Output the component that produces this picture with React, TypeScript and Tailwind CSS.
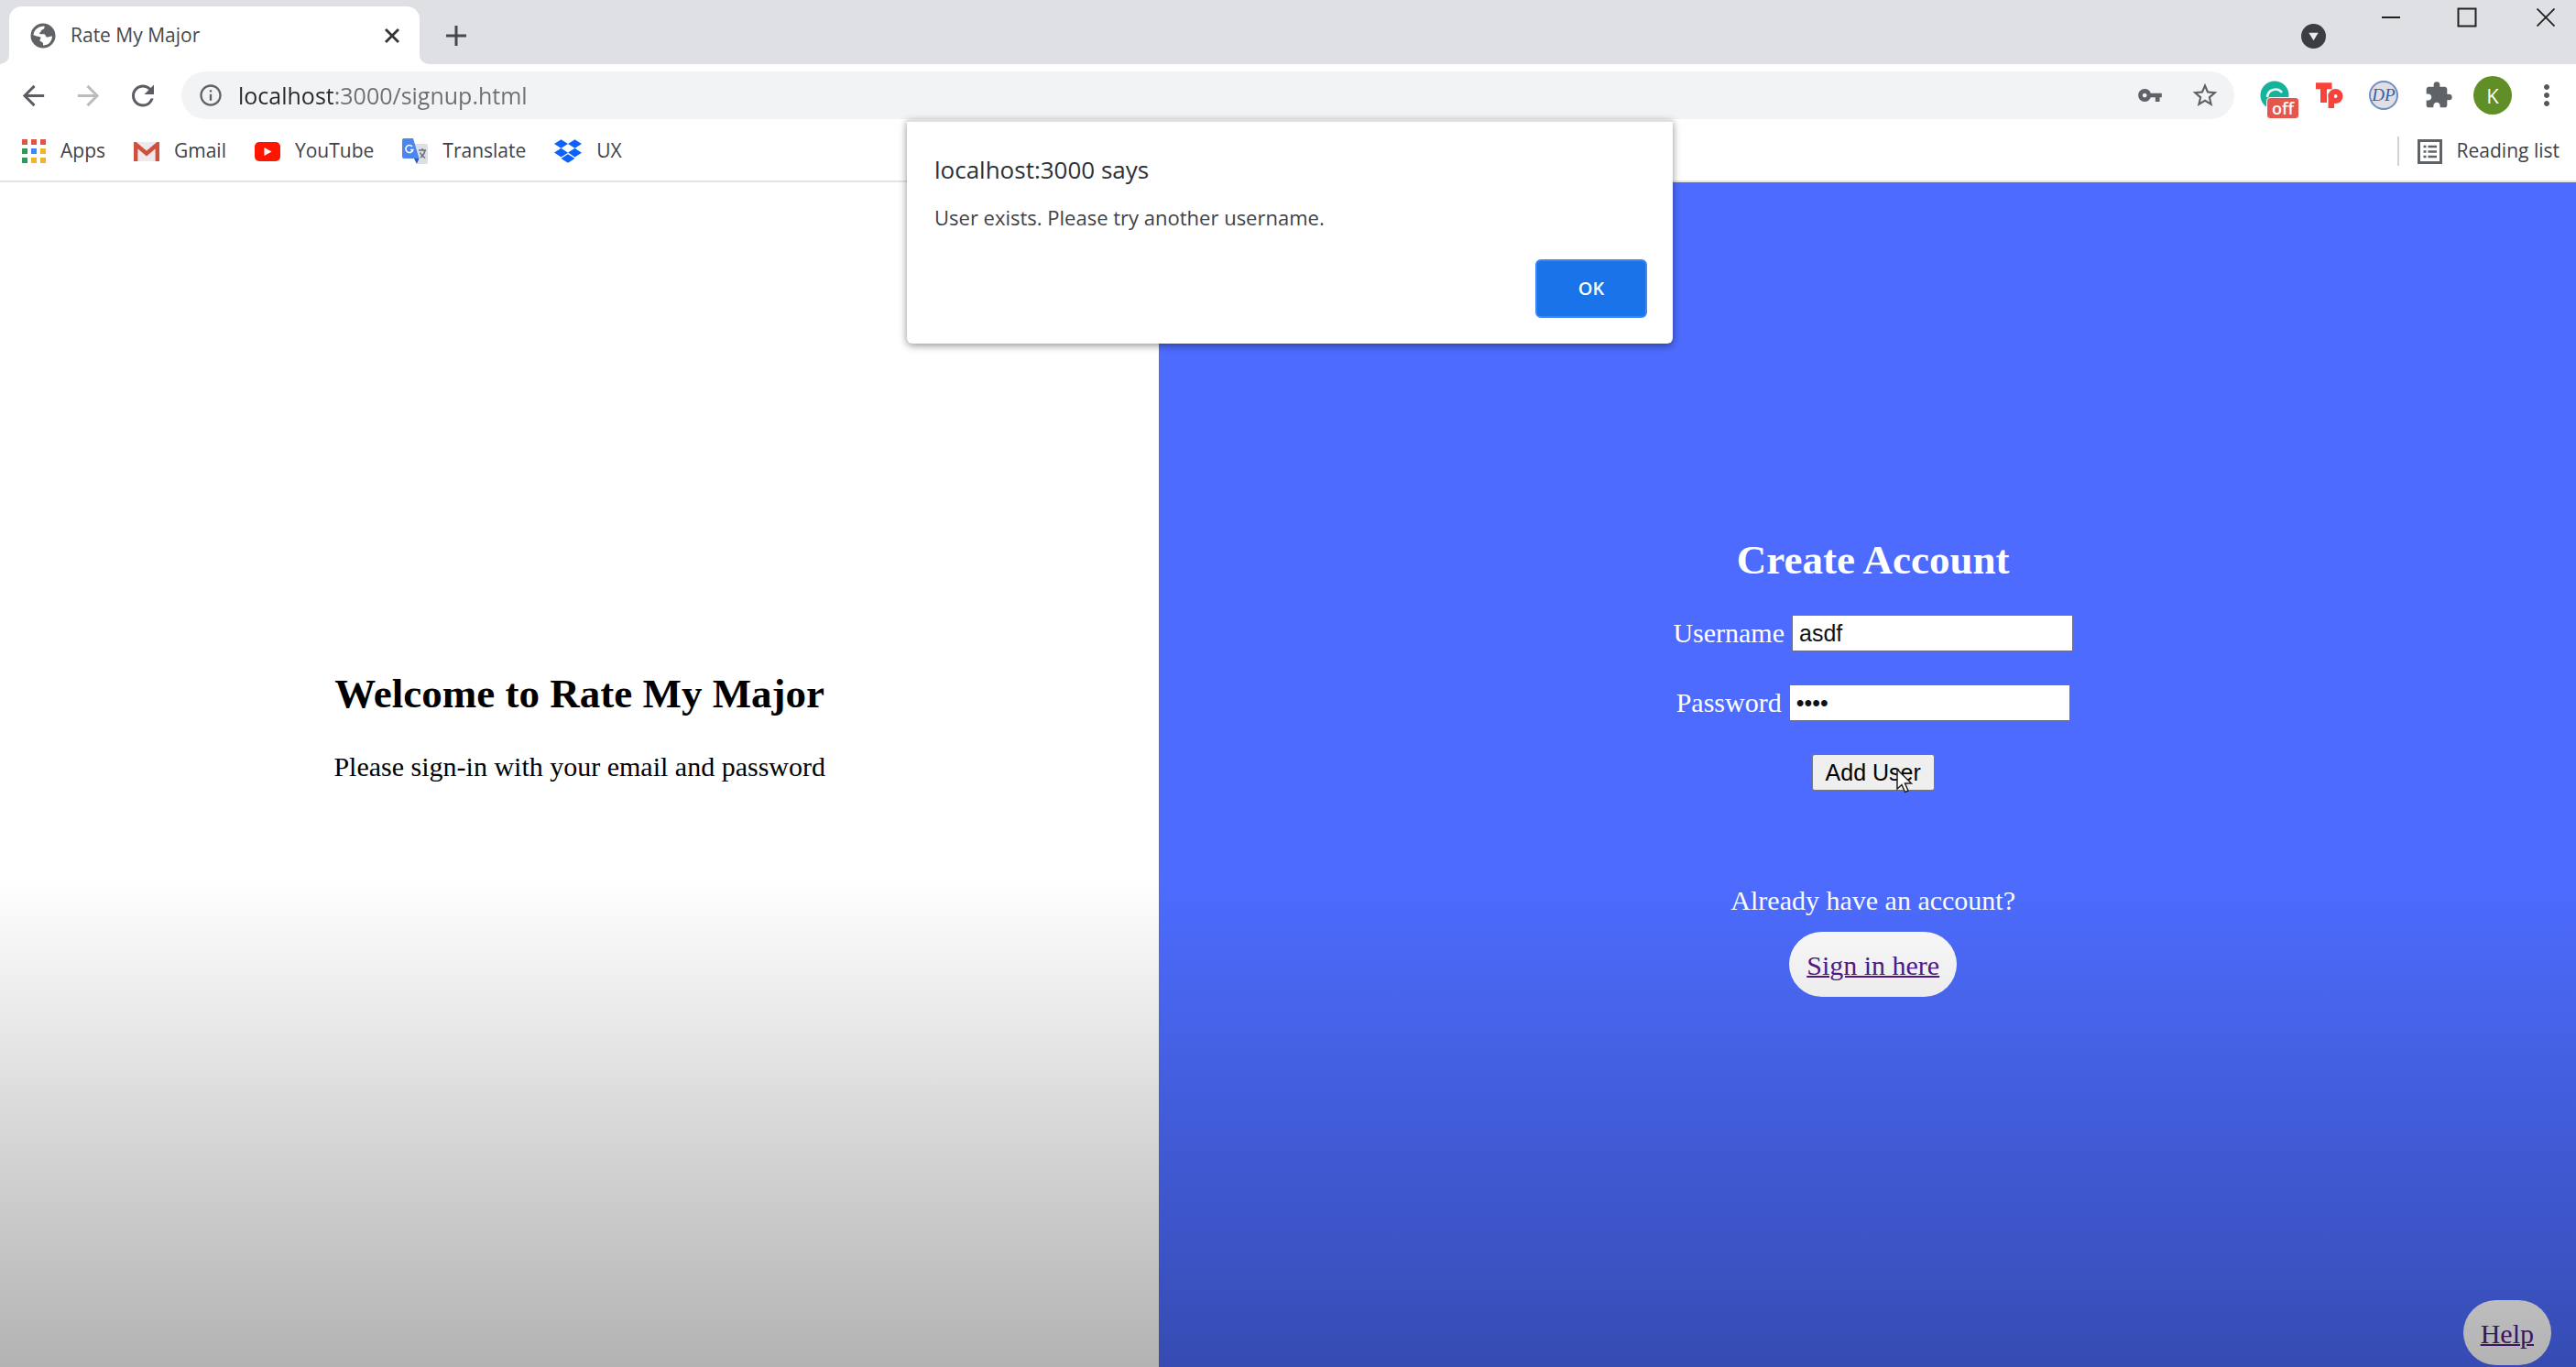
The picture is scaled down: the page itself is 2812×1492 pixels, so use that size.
import {
  MdArrowBack,
  MdArrowForward,
  MdRefresh,
  MdInfoOutline,
  MdVpnKey,
  MdStarBorder,
  MdExtension,
  MdMoreVert,
} from "react-icons/md";
import { FaDropbox } from "react-icons/fa";
import type { ReactNode } from "react";

const UI = "font-['Open_Sans','Noto_Sans',sans-serif]";

function IconButton({ label, className, children }: { label: string; className: string; children: ReactNode }) {
  return (
    <button type="button" aria-label={label} className={`flex shrink-0 items-center justify-center ${className}`}>
      {children}
    </button>
  );
}

function WindowControls() {
  return (
    <div className="flex items-start">
      <IconButton label="Search tabs" className="mt-[26px] mr-[50px] size-[27px]">
        <svg viewBox="0 0 26 26" className="size-full">
          <circle cx="13" cy="13" r="13" fill="#3b3d41" />
          <path d="M8 9.5h10L13 17.5z" fill="#e8eaed" />
        </svg>
      </IconButton>
      <IconButton label="Minimize" className="h-[38px] w-[42px]">
        <svg viewBox="0 0 20 20" className="size-5" stroke="#222" strokeWidth="2" fill="none">
          <path d="M0 10h20" />
        </svg>
      </IconButton>
      <IconButton label="Maximize" className="ml-[41px] h-[38px] w-[42px]">
        <svg viewBox="0 0 22 22" className="size-[22px]" stroke="#222" strokeWidth="2" fill="none">
          <path d="M1.5 1.5h19v19h-19z" />
        </svg>
      </IconButton>
      <IconButton label="Close window" className="mr-3 ml-[44px] h-[38px] w-[42px]">
        <svg viewBox="0 0 20 20" className="size-5" stroke="#222" strokeWidth="1.8" fill="none">
          <path d="M.5.5l19 19M19.5.5l-19 19" />
        </svg>
      </IconButton>
    </div>
  );
}

function GlobeIcon() {
  return (
    <svg viewBox="0 0 28 28" className="size-7 shrink-0">
      <circle cx="14" cy="14" r="13.5" fill="#5f6368" />
      <path
        d="M3.500 13C4 7.500 9 3.500 15.500 3.500c.5 2-.5 3.500-2.500 4-1.500.5-1 2.500-2.500 3-.8.3-.5 1.800.5 1.800h4c2 0 1.500 3 3 3.200 2 .2 3-.8 6-1-.3 6-4 10-10 10v-2c0-2-3-1.500-3.500-3.500-.3-1.500 1.500-1.500 1-3C11 14.500 6 15 3.500 13z"
        fill="#fff"
      />
    </svg>
  );
}

function TabStrip() {
  return (
    <div className="flex h-[70px] justify-between bg-[#dee0e4]">
      <div className="flex items-end">
        <svg viewBox="0 0 10 10" className="size-[10px]" fill="#fff">
          <path d="M10 0v10H0A10 10 0 0 0 10 0z" />
        </svg>
        <div className="flex h-[63px] w-[448px] items-center rounded-t-[14px] bg-white pr-[18px] pl-[23px]">
          <GlobeIcon />
          <span className="ml-4 flex-1 truncate text-[21px] text-[#45484d]">Rate My Major</span>
          <IconButton label="Close tab" className="size-6">
            <svg viewBox="0 0 16 16" className="size-4" stroke="#333" strokeWidth="2.8" fill="none">
              <path d="M1 1l14 14M15 1L1 15" />
            </svg>
          </IconButton>
        </div>
        <svg viewBox="0 0 10 10" className="size-[10px]" fill="#fff">
          <path d="M0 0v10h10A10 10 0 0 1 0 0z" />
        </svg>
        <IconButton label="New tab" className="ml-[14px] h-[63px] w-8">
          <svg viewBox="0 0 22 22" className="size-[22px]" stroke="#45484d" strokeWidth="3" fill="none">
            <path d="M11 0v22M0 11h22" />
          </svg>
        </IconButton>
      </div>
      <WindowControls />
    </div>
  );
}

function Toolbar() {
  return (
    <div className="flex items-center pt-2 pr-[14px] pb-[7px] pl-[18px]">
      <div className="flex items-center gap-6 text-[#5a5d62]">
        <IconButton label="Back" className="size-9"><MdArrowBack className="size-[35px]" /></IconButton>
        <IconButton label="Forward" className="size-9 text-[#babcbe]"><MdArrowForward className="size-[35px]" /></IconButton>
        <IconButton label="Reload" className="size-9"><MdRefresh className="size-[39px]" /></IconButton>
      </div>
      <div className="ml-6 flex h-[52px] flex-1 items-center rounded-full bg-[#f1f3f4] pr-4 pl-[18px] text-[#5f6368]">
        <MdInfoOutline className="size-7 shrink-0" />
        <input
          id="address"
          aria-label="Address"
          defaultValue="localhost:3000/signup.html"
          className="ml-4 h-10 min-w-0 flex-1 bg-[linear-gradient(90deg,#25282c_105px,#6b6f74_105px)] bg-clip-text text-[25px] text-transparent outline-none"
        />
        <IconButton label="Saved passwords" className="size-8"><MdVpnKey className="size-7" /></IconButton>
        <IconButton label="Bookmark this page" className="ml-7 size-8"><MdStarBorder className="size-8" /></IconButton>
      </div>
      <div className="ml-7 flex items-center">
        <IconButton label="Grammar checker, off" className="relative size-8">
          <svg viewBox="0 0 32 32" className="size-8">
            <circle cx="16" cy="16" r="15.5" fill="#15b39a" />
            <path d="M8 18a9 9 0 0 1 16-5" fill="none" stroke="#e8fbf7" strokeWidth="2.6" />
          </svg>
          <span className="absolute top-[18px] left-[7px] flex h-6 w-9 items-center justify-center rounded-[4px] border border-white bg-[#e5574c] text-[18px] font-semibold text-white">off</span>
        </IconButton>
        <IconButton label="Toolkit" className="ml-7 h-9 w-8">
          <svg viewBox="0 0 30 28" className="h-7 w-[30px]" fill="none" stroke="#f9423a">
            <path d="M0 3.700h17.500M8.500 3v19" strokeWidth="7" />
            <circle cx="21.500" cy="15" r="5" strokeWidth="6" />
            <path d="M16.800 12v16" strokeWidth="6.500" />
          </svg>
        </IconButton>
        <IconButton label="DP" className="ml-[27px] size-8 rounded-full border-2 border-[#6d8ec4] bg-[#e2dfe4] font-['Liberation_Serif',serif] text-[19px] text-[#2f5fa8] italic">
          DP
        </IconButton>
        <IconButton label="Extensions" className="ml-[28px] size-8 text-[#5f6368]"><MdExtension className="size-8" /></IconButton>
        <IconButton label="Profile" className="ml-[22px] size-[42px] rounded-full bg-[#5f8f26] text-[22px] text-white">K</IconButton>
        <IconButton label="Menu" className="ml-5 size-9 text-[#55585c]"><MdMoreVert className="size-9" /></IconButton>
      </div>
    </div>
  );
}

function AppsIcon() {
  const colors = ["#e25546", "#e25546", "#e25546", "#2c9a58", "#4285f4", "#f0b429", "#2c9a58", "#f0b429", "#f0b429"];
  return (
    <svg viewBox="0 0 26 26" className="size-[26px]">
      {colors.map((c, i) => (
        <rect key={i} x={(i % 3) * 10} y={Math.floor(i / 3) * 10} width="6" height="6" fill={c} />
      ))}
    </svg>
  );
}

function GmailIcon() {
  return (
    <svg viewBox="0 0 28 21" className="h-[21px] w-7">
      <rect x="2" width="24" height="21" fill="#eceaea" />
      <path d="M2.200 21V2.500L14 12.500 25.800 2.500V21" fill="none" stroke="#d0503f" strokeWidth="4.400" />
    </svg>
  );
}

function YouTubeIcon() {
  return (
    <svg viewBox="0 0 28 21" className="h-[21px] w-7">
      <rect width="28" height="21" rx="5" fill="#ff1500" />
      <path d="M10.500 6v9l8-4.500z" fill="#fff" />
    </svg>
  );
}

function TranslateIcon() {
  return (
    <svg viewBox="0 0 28 28" className="size-7">
      <path d="M11 6h15a2 2 0 0 1 2 2v18a2 2 0 0 1-2 2H17z" fill="#dcdfe4" />
      <path d="M2 0h10l6.500 22H2a2 2 0 0 1-2-2V2a2 2 0 0 1 2-2z" fill="#4a86ee" />
      <path d="M13 22h5.500L16 28z" fill="#3457b0" />
      <path d="M11 9a4 4 0 1 0 .8 3.500H9" fill="none" stroke="#fff" strokeWidth="1.600" />
      <path d="M18 13h8M22 11v2M25 13c-.8 4-3 6.500-5 8M19.500 15.500c1 2.500 3.500 4.500 5.500 6" fill="none" stroke="#6b7078" strokeWidth="1.500" />
    </svg>
  );
}

function ReadingListIcon() {
  return (
    <svg viewBox="0 0 27 27" className="size-[27px]" fill="none" stroke="#5f6368">
      <rect x="1.500" y="1.500" width="24" height="24" strokeWidth="3" />
      <path d="M6.500 8h3M6.500 13.500h3M6.500 19h3M11.500 8h9.500M11.500 13.500h9.500M11.500 19h9.500" strokeWidth="2.400" />
    </svg>
  );
}

function Bookmark({ icon, label }: { icon: ReactNode; label: string }) {
  return (
    <a href="#" className="flex items-center gap-4">
      {icon}
      {label}
    </a>
  );
}

function BookmarksBar() {
  return (
    <div className="flex h-[62px] items-center justify-between border-b-2 border-[#e3e4e6] pr-[18px] pb-1 pl-6 text-[21px] text-[#3f4247]">
      <nav aria-label="Bookmarks" className="flex items-center gap-[31px]">
        <Bookmark icon={<AppsIcon />} label="Apps" />
        <Bookmark icon={<GmailIcon />} label="Gmail" />
        <Bookmark icon={<YouTubeIcon />} label="YouTube" />
        <Bookmark icon={<TranslateIcon />} label="Translate" />
        <Bookmark icon={<FaDropbox className="size-[30px] text-[#0d62fe]" />} label="UX" />
      </nav>
      <button type="button" className="flex items-center gap-4 border-l-2 border-[#d0d2d5] pl-5">
        <ReadingListIcon />
        Reading list
      </button>
    </div>
  );
}

function AlertDialog() {
  return (
    <div
      role="alertdialog"
      aria-labelledby="alert-title"
      aria-describedby="alert-text"
      className={`absolute top-[131px] left-[990px] z-20 flex w-[836px] flex-col rounded-b-[6px] border-t-2 border-[#dfe1e1] bg-white pt-8 pr-7 pb-7 pl-[30px] shadow-[0_2px_8px_rgba(0,0,0,0.45)] ${UI}`}
    >
      <h1 id="alert-title" className="text-[26px] leading-[40px] text-[#2d3034]">localhost:3000 says</h1>
      <p id="alert-text" className="mt-4 text-[22px] leading-8 text-[#3f4247]">User exists. Please try another username.</p>
      <button type="button" className="mt-[30px] h-16 w-[122px] self-end rounded-[6px] border-2 border-[#3f88f2] bg-[#1a73e8] text-[20px] font-semibold text-white">
        OK
      </button>
    </div>
  );
}

function Field({ id, label, type, value }: { id: string; label: string; type: string; value: string }) {
  return (
    <div className="flex items-center gap-2">
      <label htmlFor={id}>{label}</label>
      <input
        id={id}
        type={type}
        defaultValue={value}
        className="h-10 w-[307px] border border-[#6a6f8c] bg-white px-[7px] font-['Liberation_Sans',Arial,sans-serif] text-[25px] text-[#111] outline-none"
      />
    </div>
  );
}

function Cursor() {
  return (
    <svg viewBox="0 0 18 27" className="pointer-events-none absolute top-4 left-[92px] h-[27px] w-[18px]">
      <path d="M1 1v21l5-4.500 3.500 8 3.500-1.500-3.500-8H16.500z" fill="#fff" stroke="#222" strokeWidth="1.500" />
    </svg>
  );
}

const pill = "rounded-[36px] bg-white px-[19px] pt-[19px] pb-4 text-[#551a8b] underline decoration-2 leading-9";

export default function App() {
  return (
    <div className="relative flex min-h-screen flex-col bg-white">
      <header className={`bg-white ${UI}`}>
        <TabStrip />
        <Toolbar />
        <BookmarksBar />
      </header>
      <AlertDialog />
      <main className="relative flex flex-1 font-['Liberation_Serif','Times_New_Roman',serif] text-[30px] leading-9">
        <section className="flex w-[45%] flex-col items-center justify-center bg-white pb-[106px] text-black">
          <h2 className="text-[45px] leading-[52px] font-bold">Welcome to Rate My Major</h2>
          <p className="mt-9">Please sign-in with your email and password</p>
        </section>
        <section className="flex flex-1 flex-col items-center justify-center bg-[#4d6cff] pb-[18px] pl-3 text-white">
          <form className="flex flex-col items-center" onSubmit={(e) => e.preventDefault()}>
            <h2 className="text-[45px] leading-[52px] font-bold">Create Account</h2>
            <div className="mt-[34px] flex flex-col items-center gap-9">
              <Field id="username" label="Username" type="text" value="asdf" />
              <Field id="password" label="Password" type="password" value="asdf" />
              <div className="relative">
                <button type="submit" className="h-10 w-[134px] rounded-[3px] border border-[#767676] bg-[#efefef] font-['Liberation_Sans',Arial,sans-serif] text-[25px] leading-9 text-black">
                  Add User
                </button>
                <Cursor />
              </div>
            </div>
          </form>
          <p className="mt-[102px]">Already have an account?</p>
          <a href="#signin" className={`mt-4 ${pill}`}>Sign in here</a>
        </section>
        <a href="#help" className={`absolute right-[27px] bottom-[2px] ${pill}`}>Help</a>
        <div className="pointer-events-none absolute inset-x-0 bottom-0 h-[36vh] bg-linear-to-t from-black/30 to-transparent" />
      </main>
    </div>
  );
}
